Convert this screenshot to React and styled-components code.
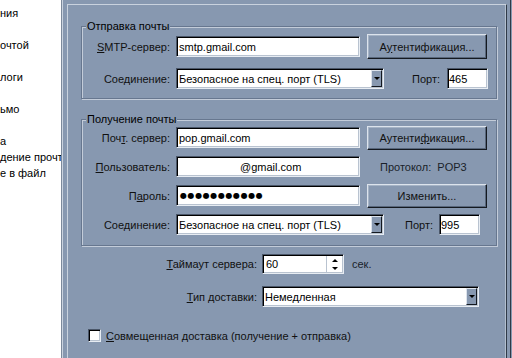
import React from 'react';
import styled, { createGlobalStyle } from 'styled-components';

const GlobalStyle = createGlobalStyle`
  html, body {
    margin: 0;
    padding: 0;
    background: #8798b0;
  }
  body {
    font-family: "Liberation Sans", Arial, sans-serif;
    font-size: 11px;
    color: #111;
  }
`;

const BG = '#8798b0';

const Screen = styled.div`
  width: 512px;
  height: 358px;
  display: flex;
  overflow: hidden;
  background: ${BG};
`;

const Sidebar = styled.div`
  box-sizing: border-box;
  width: 62px;
  flex: none;
  background: #fff;
  border-right: 1px solid #7c899b;
  box-shadow: 1px 0 0 #c9d2de;
  padding-top: 5px;
  display: flex;
  flex-direction: column;
  gap: 16px;
  overflow: hidden;
`;

const SideItem = styled.div`
  line-height: 16px;
  white-space: nowrap;
  color: #000;
`;

const Main = styled.div`
  flex: 1;
  display: flex;
  padding: 4px 0 0 5px;
  border-right: 1px solid #2f3a48;
  margin-right: 1px;
`;

const Panel = styled.div`
  box-sizing: border-box;
  width: 440px;
  border-top: 1px solid #c9d2de;
  border-left: 1px solid #c9d2de;
  border-right: 1px solid #2f3a48;
  box-shadow: inset -1px 0 0 #b3bfce;
  display: flex;
  flex-direction: column;
  padding-left: 13px;
`;

const Group = styled.div`
  position: relative;
  box-sizing: border-box;
  width: 416px;
  margin-top: ${p => p.$mt}px;
  border: 1px solid #67778f;
  box-shadow: inset 1px 1px 0 #c3ccd9, 1px 1px 0 #c3ccd9;
  padding: ${p => p.$pad};
  display: flex;
  flex-direction: column;
  gap: ${p => p.$gap}px;
`;

const Legend = styled.span`
  position: absolute;
  top: -7px;
  left: 4px;
  padding: 0 1px;
  line-height: 13px;
  background: ${BG};
  color: #000;
`;

const Row = styled.div`
  display: flex;
  align-items: center;
  height: ${p => p.$h || 21}px;
  margin-top: ${p => p.$mt || 0}px;
  padding-left: ${p => p.$pl || 0}px;
`;

const Label = styled.span`
  width: ${p => p.$w || 88}px;
  flex: none;
  text-align: right;
  margin-right: ${p => p.$mr ?? 6}px;
  margin-left: ${p => p.$ml || 0}px;
  white-space: nowrap;
`;

const Acc = styled.span`
  text-decoration: underline;
  text-underline-offset: 1px;
`;

const Field = styled.div`
  box-sizing: border-box;
  width: ${p => p.$w}px;
  height: ${p => p.$h || 21}px;
  flex: none;
  background: #fff;
  border: 1px solid;
  border-color: #4a5668 #e8edf3 #e8edf3 #4a5668;
  box-shadow: inset 1px 1px 0 #000, inset -1px -1px 0 #b9c3d0;
  padding: 0 2px 0 ${p => p.$pl || 2}px;
  display: flex;
  align-items: center;
  white-space: nowrap;
  overflow: hidden;
  color: #000;
  position: relative;
`;

const Dots = styled.span`
  font-family: "DejaVu Sans", sans-serif;
  font-size: 8px;
  letter-spacing: 0.6px;
  padding-left: 1px;
`;

const Button = styled.div`
  box-sizing: border-box;
  width: 120px;
  height: ${p => p.$h || 25}px;
  flex: none;
  margin-left: 7px;
  background: ${BG};
  border: 1px solid;
  border-color: #dce3ec #141920 #141920 #dce3ec;
  box-shadow: inset -1px -1px 0 #58677c, inset 1px 1px 0 #a5b3c5;
  display: flex;
  align-items: center;
  justify-content: center;
  color: #111;
`;

const Select = styled(Field)`
  padding-right: 14px;
`;

const DropBtn = styled.div`
  position: absolute;
  top: 1px;
  right: 1px;
  bottom: 1px;
  width: 11px;
  box-sizing: border-box;
  background: ${BG};
  border: 1px solid;
  border-color: #dce3ec #141920 #141920 #dce3ec;
  display: flex;
  align-items: center;
  justify-content: center;
  &::after {
    content: '';
    border-left: 3px solid transparent;
    border-right: 3px solid transparent;
    border-top: 3px solid #000;
  }
`;

const Spin = styled.div`
  position: absolute;
  top: 1px;
  right: 1px;
  bottom: 1px;
  width: 15px;
  background: #fff;
  border-left: 1px solid #b9c3d0;
  display: flex;
  flex-direction: column;
`;

const SpinHalf = styled.div`
  flex: 1;
  display: flex;
  align-items: center;
  justify-content: center;
  &::after {
    content: '';
    border-left: 3px solid transparent;
    border-right: 3px solid transparent;
    ${p => (p.$up ? 'border-bottom: 3px solid #000;' : 'border-top: 3px solid #000;')}
  }
`;

const Info = styled.span`
  margin-left: ${p => p.$ml}px;
  white-space: nowrap;
  color: #1a1f2a;
`;

const Check = styled.div`
  box-sizing: border-box;
  width: 13px;
  height: 13px;
  flex: none;
  background: #fff;
  border: 1px solid;
  border-color: #4a5668 #e8edf3 #e8edf3 #4a5668;
  box-shadow: inset 1px 1px 0 #000, inset -1px -1px 0 #b9c3d0;
  margin-right: 5px;
`;

const sideItems = ['ния', 'очтой', 'логи', 'ьмо'];

export default function App() {
  return (
    <>
      <GlobalStyle />
      <Screen>
        <Sidebar>
          {sideItems.map(t => (
            <SideItem key={t}>{t}</SideItem>
          ))}
          <SideItem>
            а<br />
            дение прочт<br />
            е в файл
          </SideItem>
        </Sidebar>
        <Main>
          <Panel>
            <Group $mt={21} $pad="9px 0 9px 0" $gap={11}>
              <Legend>Отправка почты</Legend>
              <Row>
                <Label><Acc>S</Acc>MTP-сервер:</Label>
                <Field $w={184}>smtp.gmail.com</Field>
                <Button>А<Acc>у</Acc>тентификация...</Button>
              </Row>
              <Row>
                <Label>Соединение:</Label>
                <Select $w={208}>
                  Безопасное на спец. порт (TLS)
                  <DropBtn />
                </Select>
                <Label $w={28} $ml={28} $mr={7}>Порт:</Label>
                <Field $w={41} $pl={1}>465</Field>
              </Row>
            </Group>

            <Group $mt={20} $pad="7px 0 10px 0" $gap={8}>
              <Legend>Получение почты</Legend>
              <Row>
                <Label>Поч<Acc>т</Acc>. сервер:</Label>
                <Field $w={184}>pop.gmail.com</Field>
                <Button $h={24}>Аутенти<Acc>ф</Acc>икация...</Button>
              </Row>
              <Row>
                <Label><Acc>П</Acc>ользователь:</Label>
                <Field $w={184} $pl={63}>@gmail.com</Field>
                <Info $ml={20}>Протокол:&nbsp; POP3</Info>
              </Row>
              <Row>
                <Label>П<Acc>а</Acc>роль:</Label>
                <Field $w={184}><Dots>●●●●●●●●●●●</Dots></Field>
                <Button $h={24}>Изменить...</Button>
              </Row>
              <Row>
                <Label>Соединение:</Label>
                <Select $w={208}>
                  Безопасное на спец. порт (TLS)
                  <DropBtn />
                </Select>
                <Label $w={30} $ml={19} $mr={6}>Порт:</Label>
                <Field $w={41} $pl={1}>995</Field>
              </Row>
            </Group>

            <Row $h={20} $mt={8}>
              <Label $w={176} $mr={5}><Acc>Т</Acc>аймаут сервера:</Label>
              <Field $w={82} $h={20} $pl={3}>
                60
                <Spin>
                  <SpinHalf $up />
                  <SpinHalf />
                </Spin>
              </Field>
              <Info $ml={8}>сек.</Info>
            </Row>

            <Row $h={21} $mt={12}>
              <Label $w={176} $mr={5}><Acc>Т</Acc>ип доставки:</Label>
              <Select $w={217}>
                Немедленная
                <DropBtn />
              </Select>
            </Row>

            <Row $h={13} $mt={22} $pl={7}>
              <Check />
              <span><Acc>С</Acc>овмещенная доставка (получение + отправка)</span>
            </Row>
          </Panel>
        </Main>
      </Screen>
    </>
  );
}
